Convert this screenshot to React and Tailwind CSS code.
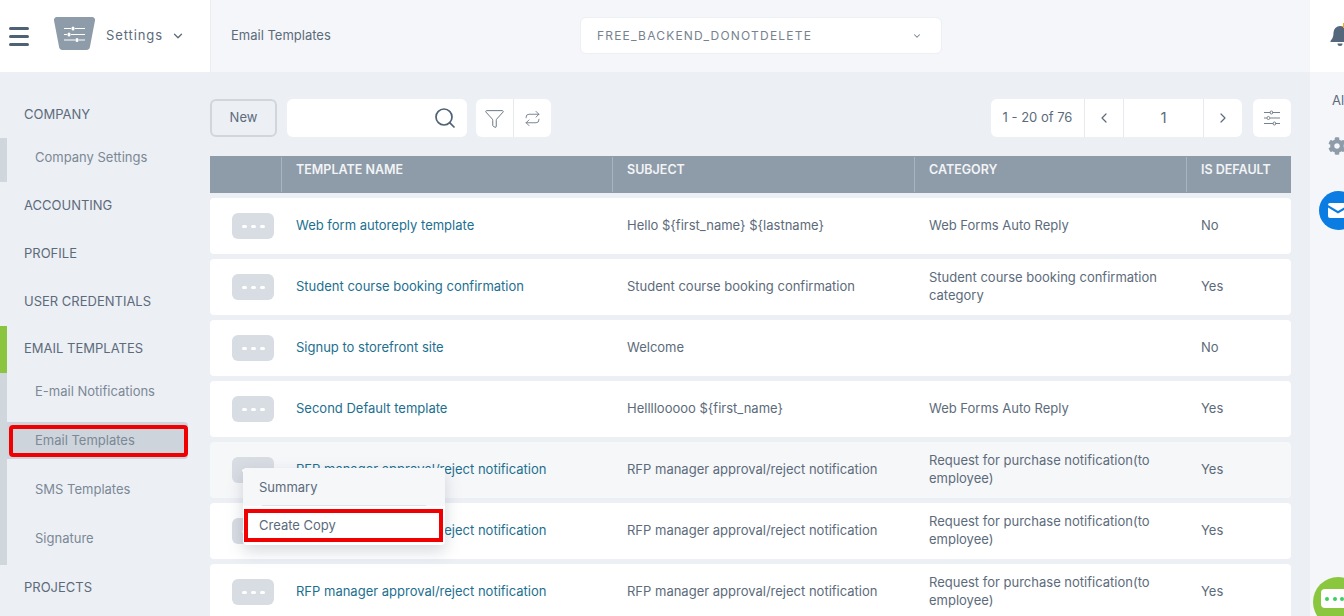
import React from "react";
import { ChevronDown, ChevronLeft, ChevronRight, Funnel, Repeat, Search } from "lucide-react";
import { FaCog } from "react-icons/fa";

const Sliders = ({ className }) => (
  <svg viewBox="0 0 18 18" fill="none" stroke="currentColor" strokeWidth="1" className={className}>
    <path d="M1 3.5h6M10 3.5h7M1 9h3M7 9h10M1 14.5h9M13 14.5h4" />
    <rect x="7.2" y="2" width="2.4" height="3" rx="1" />
    <rect x="4.2" y="7.5" width="2.4" height="3" rx="1" />
    <rect x="10.2" y="13" width="2.4" height="3" rx="1" />
  </svg>
);

const rows = [
  { name: "Web form autoreply template", subject: "Hello ${first_name} ${lastname}", category: "Web Forms Auto Reply", isDefault: "No" },
  { name: "Student course booking confirmation", subject: "Student course booking confirmation", category: "Student course booking confirmation category", isDefault: "Yes" },
  { name: "Signup to storefront site", subject: "Welcome", category: "", isDefault: "No" },
  { name: "Second Default template", subject: "Hellllooooo ${first_name}", category: "Web Forms Auto Reply", isDefault: "Yes" },
  { name: "RFP manager approval/reject notification", subject: "RFP manager approval/reject notification", category: "Request for purchase notification(to employee)", isDefault: "Yes", open: true },
  { name: "RFP manager approval/reject notification", subject: "RFP manager approval/reject notification", category: "Request for purchase notification(to employee)", isDefault: "Yes" },
  { name: "RFP manager approval/reject notification", subject: "RFP manager approval/reject notification", category: "Request for purchase notification(to employee)", isDefault: "Yes" },
];

const Heading = ({ children, className = "" }) => (
  <div className={`h-[48px] pl-6 flex items-center text-[13px] text-[#5c6b7b] ${className}`}>{children}</div>
);

const SubItem = ({ children, active, className = "" }) => (
  <div className={`relative h-[37px] w-[181px] pl-7 flex items-center text-[13px] text-[#7b8896] rounded-r ${active ? "bg-[#cdd4db]" : ""} ${className}`}>
    {children}
    {active && <div className="absolute left-[2px] top-[3px] w-[179px] h-[32px] border-4 border-[#f00000] rounded-sm" />}
  </div>
);

const Row = ({ row }) => (
  <div className={`relative grid grid-cols-[71px_331px_302px_272px_105px] h-[56px] rounded items-center text-[13px] ${row.open ? "bg-[#f6f7f9] z-10" : "bg-white"}`}>
    <div className="pl-[22px]">
      <div className="w-[42px] h-[26px] rounded-md bg-[#d8dce3] flex items-center justify-center gap-[4px]">
        <span className="w-[5px] h-[3px] rounded-full bg-white" />
        <span className="w-[5px] h-[3px] rounded-full bg-white" />
        <span className="w-[5px] h-[3px] rounded-full bg-white" />
      </div>
    </div>
    <div className="pl-[15px] text-[#1c6f8f]">{row.name}</div>
    <div className="pl-[15px] text-[#5c6b7b]">{row.subject}</div>
    <div className="pl-[15px] pr-5 pb-[2px] text-[#5c6b7b] leading-[18px]">{row.category}</div>
    <div className="pl-[15px] text-[#5c6b7b]">{row.isDefault}</div>
    {row.open && (
      <div className="absolute left-[33px] top-[26px] w-[202px] h-[77px] bg-white rounded shadow-[0_6px_16px_rgba(90,105,125,0.25)] text-[13px] text-[#5c6b7b] overflow-hidden">
        <div className="h-[38px] bg-[#f5f7f9] pl-4 pt-px flex items-center">
          Summary
          <div className="absolute left-[19px] top-[37px] w-[164px] h-px bg-[#dfe3e8]" />
        </div>
        <div className="relative h-[39px] pl-4 flex items-center">
          Create Copy
          <div className="absolute left-px top-[3px] w-[199px] h-[33px] border-4 border-[#f00000]" />
        </div>
      </div>
    )}
  </div>
);

export default function App() {
  return (
    <div className="w-[1344px] h-[616px] overflow-hidden flex flex-col bg-[#eceff4] font-['Inter',sans-serif]">
      {/* top bar */}
      <header className="h-[72px] shrink-0 flex">
        <div className="w-[211px] shrink-0 bg-white border-r border-[#e9ecf0] flex items-center pl-[9px]">
          <div className="w-[20px] flex flex-col gap-[5px]">
            <span className="h-[3px] bg-[#4f6275] rounded-sm" />
            <span className="h-[3px] bg-[#4f6275] rounded-sm" />
            <span className="h-[3px] bg-[#4f6275] rounded-sm" />
          </div>
          <svg viewBox="0 0 41 33" className="w-[41px] h-[33px] ml-[25px] -mt-[5px] shrink-0">
            <path d="M3 0h35a3 3 0 0 1 3 3.5l-5 26a4 4 0 0 1-3.5 3.5h-24a4 4 0 0 1-3.5-3.5L0 3.5A3 3 0 0 1 3 0z" fill="#8e9ba8" />
            <path d="M10 11.5h7M21 11.5h10M10 17.5h3M17 17.5h14M10 23h11M25 23h6" stroke="#fff" strokeWidth="1" />
            <rect x="17.5" y="9.5" width="3" height="4" rx="1.5" fill="#fff" />
            <rect x="13.5" y="15.5" width="3" height="4" rx="1.5" fill="#fff" />
            <rect x="21.5" y="21" width="3" height="4" rx="1.5" fill="#fff" />
          </svg>
          <span className="ml-[11px] text-[13px] tracking-[0.9px] text-[#5c6b7b]">Settings</span>
          <ChevronDown className="w-[14px] h-[14px] ml-2 text-[#5c6b7b]" strokeWidth={2.2} />
        </div>
        <div className="w-[1099px] shrink-0 bg-[#f4f6f9] flex items-center">
          <span className="w-[369px] pl-5 text-[13px] text-[#5c6b7b]">Email Templates</span>
          <div className="w-[362px] h-[37px] -mt-px bg-white border border-[#eceff3] rounded-md flex items-center justify-between pl-4 pr-[19px] text-[12px] tracking-[1.2px] text-[#76838f]">
            FREE_BACKEND_DONOTDELETE
            <ChevronDown className="w-[10px] h-[10px]" strokeWidth={2.5} />
          </div>
        </div>
        <div className="w-[34px] shrink-0 bg-white pl-[20px] pt-[25px] relative">
          <svg viewBox="0 0 20 22" className="w-[20px] h-[22px] shrink-0 text-[#55677a]" fill="currentColor">
            <path d="M10 1a6.5 6.5 0 0 0-6.5 6.5c0 5-1.5 6.5-3 8.5v1h19v-1c-1.5-2-3-3.5-3-8.5A6.5 6.5 0 0 0 10 1z" />
            <path d="M7.5 18.5h5a2.5 2.5 0 0 1-5 0z" />
          </svg>
          <span className="absolute left-[33px] top-[23px] w-[3px] h-[5px] bg-[#f5a623]" />
        </div>
      </header>

      <div className="flex-1 flex min-h-0">
        {/* left nav */}
        <nav className="w-[210px] shrink-0 pt-[18px]">
          <Heading className="pt-[2px]">COMPANY</Heading>
          <div className="border-l-[7px] border-[#cfd6dc] pb-[7px]">
            <SubItem className="pt-[2px]">Company Settings</SubItem>
          </div>
          <Heading>ACCOUNTING</Heading>
          <Heading>PROFILE</Heading>
          <Heading>USER CREDENTIALS</Heading>
          <div className="border-l-[7px] border-[#8bc53f] -mb-px">
            <div className="-ml-[7px]"><Heading className="pb-[2px]">EMAIL TEMPLATES</Heading></div>
          </div>
          <div className="border-l-[7px] border-[#cfd6dc] pb-2 flex flex-col gap-3">
            <SubItem>E-mail Notifications</SubItem>
            <SubItem active>Email Templates</SubItem>
            <SubItem>SMS Templates</SubItem>
            <SubItem>Signature</SubItem>
          </div>
          <Heading className="pb-[2px]">PROJECTS</Heading>
        </nav>

        {/* table area */}
        <main className="w-[1100px] shrink-0 pt-[27px] pr-[19px]">
          <div className="h-[38px] flex text-[#5c6b7b]">
            <div className="w-[67px] border-2 border-[#d1d6dd] rounded-md flex items-center justify-center text-[13px]">New</div>
            <div className="w-[180px] ml-[10px] bg-white rounded-md flex items-center justify-end pr-[10px]">
              <Search className="w-[24px] h-[24px] text-[#4f6275]" strokeWidth={1.7} />
            </div>
            <div className="w-[75px] ml-[9px] bg-white rounded-md flex items-center text-[#66747f]">
              <div className="w-[38px] h-full border-r border-[#e6e9ee] flex items-center justify-center">
                <Funnel className="w-[21px] h-[21px]" strokeWidth={1.1} />
              </div>
              <div className="flex-1 flex items-center justify-center">
                <Repeat className="w-[17px] h-[17px]" strokeWidth={1.2} />
              </div>
            </div>
            <div className="w-[251px] ml-auto bg-white rounded-md flex items-center text-[13px]">
              <div className="w-[94px] h-full border-r border-[#e6e9ee] flex items-center justify-center">1 - 20 of 76</div>
              <div className="w-[39px] h-full border-r border-[#e6e9ee] flex items-center justify-center">
                <ChevronLeft className="w-[16px] h-[16px]" strokeWidth={1.8} />
              </div>
              <div className="w-[80px] h-full border-r border-[#e6e9ee] flex items-center justify-center text-[15px]">1</div>
              <div className="flex-1 flex items-center justify-center">
                <ChevronRight className="w-[16px] h-[16px]" strokeWidth={1.8} />
              </div>
            </div>
            <div className="w-[38px] ml-[11px] bg-white rounded-md flex items-center justify-center text-[#76838f]">
              <Sliders className="w-[18px] h-[18px]" />
            </div>
          </div>

          <div className="mt-[19px] h-[37px] grid grid-cols-[72px_331px_302px_272px_104px] bg-[#8e9ba8] text-[#f2f4f6] text-[12.5px] font-semibold">
            <div className="my-px border-r border-[#a9b4be]" />
            <div className="my-px border-r border-[#a9b4be] pl-[14px] pt-[4px]">TEMPLATE NAME</div>
            <div className="my-px border-r border-[#a9b4be] pl-[14px] pt-[4px]">SUBJECT</div>
            <div className="my-px border-r border-[#a9b4be] pl-[14px] pt-[4px]">CATEGORY</div>
            <div className="my-px pl-[14px] pt-[4px]">IS DEFAULT</div>
          </div>

          <div className="mt-[5px] flex flex-col gap-[5px]">
            {rows.map((row, index) => (
              <Row key={index} row={row} />
            ))}
          </div>
        </main>

        {/* right rail, runs off the edge of the window */}
        <aside className="w-[34px] shrink-0 bg-[#f4f6f9] flex flex-col">
          <div className="mt-[18px] pl-[22px] h-[20px] leading-[20px] text-[13px] text-[#5c6b7b]">All</div>
          <FaCog className="mt-[27px] ml-[18px] w-[18px] h-[18px] shrink-0 text-[#8e9ba8]" />
          <div className="mt-[36px] ml-[9px] w-[39px] h-[39px] shrink-0 rounded-full bg-[#0b7ce2] pl-[9px] flex items-center">
            <svg viewBox="0 0 20 15" className="w-[20px] h-[15px] shrink-0">
              <path d="M0 2a2 2 0 0 1 2-2h16a2 2 0 0 1 2 2l-10 6z" fill="#fff" />
              <path d="M0 4.5V13a2 2 0 0 0 2 2h16a2 2 0 0 0 2-2V4.5l-10 6z" fill="#fff" />
            </svg>
          </div>
          <div className="mt-[347px] ml-[3px] w-[50px] h-[50px] shrink-0 rounded-full bg-[#8bc63f] pl-[8px] pt-[12px]">
            <div className="w-[40px] h-[19px] rounded bg-white flex items-center gap-[3.5px] pl-[4px]">
              <span className="w-[4px] h-[4px] rounded-full bg-[#3ecf5e]" />
              <span className="w-[4px] h-[4px] rounded-full bg-[#3ecf5e]" />
              <span className="w-[4px] h-[4px] rounded-full bg-[#3ecf5e]" />
            </div>
          </div>
        </aside>
      </div>
    </div>
  );
}
